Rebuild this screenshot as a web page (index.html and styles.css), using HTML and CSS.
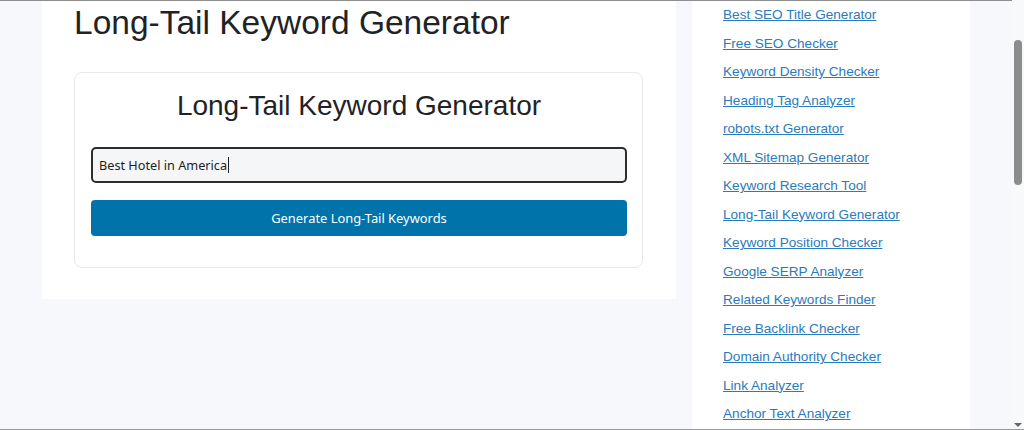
FILE: index.html
```html
<!DOCTYPE html>
<html lang="en">
<head>
<meta charset="utf-8">
<title>Long-Tail Keyword Generator</title>
<link rel="stylesheet" href="styles.css">
</head>
<body>
<div class="frame">
  <div class="page">
    <main class="content">
      <h1 class="title">Long-Tail Keyword Generator</h1>
      <section class="card">
        <h2 class="card-title">Long-Tail Keyword Generator</h2>
        <div class="field"><span class="field-text">Best Hotel in America</span><span class="caret"></span></div>
        <button class="btn" type="button">Generate Long-Tail Keywords</button>
      </section>
    </main>
    <aside class="sidebar">
      <ul class="links">
        <li><a href="#">Best SEO Title Generator</a></li>
        <li><a href="#">Free SEO Checker</a></li>
        <li><a href="#">Keyword Density Checker</a></li>
        <li><a href="#">Heading Tag Analyzer</a></li>
        <li><a href="#">robots.txt Generator</a></li>
        <li><a href="#">XML Sitemap Generator</a></li>
        <li><a href="#">Keyword Research Tool</a></li>
        <li><a href="#">Long-Tail Keyword Generator</a></li>
        <li><a href="#">Keyword Position Checker</a></li>
        <li><a href="#">Google SERP Analyzer</a></li>
        <li><a href="#">Related Keywords Finder</a></li>
        <li><a href="#">Free Backlink Checker</a></li>
        <li><a href="#">Domain Authority Checker</a></li>
        <li><a href="#">Link Analyzer</a></li>
        <li><a href="#">Anchor Text Analyzer</a></li>
      </ul>
    </aside>
  </div>
  <div class="scrollbar">
    <div class="thumb"></div>
    <div class="arrow"></div>
  </div>
</div>
</body>
</html>
```
FILE: styles.css
```css
html, body {
  margin: 0;
  padding: 0;
  height: 430px;
  overflow: hidden;
}
body {
  background: #f6f8fc;
  font-family: "Liberation Sans", Arial, sans-serif;
}
.frame {
  display: flex;
  height: 430px;
  box-sizing: border-box;
  border-bottom: 1px solid #9a9a9a;
}
.page {
  flex: 1;
  display: flex;
  align-items: flex-start;
  gap: 16px;
  padding-left: 42px;
  border-top: 1px solid #8e8e8e;
  height: 429px;
  box-sizing: border-box;
  overflow: hidden;
}
.content {
  width: 634px;
  flex: none;
  box-sizing: border-box;
  background: #ffffff;
  padding: 2px 33px 31px 32px;
}
.title {
  margin: 0;
  font-size: 33.5px;
  line-height: 40px;
  font-weight: 400;
  color: #1f2326;
}
.card {
  margin-top: 29px;
  border: 1px solid #e7e8ea;
  border-radius: 8px;
  padding: 17px 15px 31px 16px;
  background: #ffffff;
}
.card-title {
  margin: 0 0 25px;
  text-align: center;
  font-size: 28px;
  line-height: 32px;
  font-weight: 400;
  color: #1f2326;
}
.field {
  display: flex;
  align-items: center;
  height: 36px;
  box-sizing: border-box;
  border: 2px solid #2d2d2d;
  border-radius: 5px;
  background: #f5f6f8;
  padding: 0 6px;
  font-family: "Noto Sans", "Open Sans", sans-serif;
  font-size: 12.7px;
  color: #1e1e1e;
}
.caret {
  display: inline-block;
  width: 1px;
  height: 16px;
  background: #222;
  margin-left: 1px;
}
.btn {
  display: block;
  width: 100%;
  height: 36px;
  margin-top: 17px;
  border: 0;
  border-radius: 4px;
  background: #0073aa;
  color: #ffffff;
  font-family: "Noto Sans", "Open Sans", sans-serif;
  font-size: 12.9px;
  cursor: pointer;
}
.sidebar {
  width: 278px;
  flex: none;
  align-self: stretch;
  background: #ffffff;
  padding-left: 31px;
  box-sizing: border-box;
}
.links {
  list-style: none;
  margin: 0;
  padding: 0;
}
.links li {
  line-height: 28.5px;
  font-size: 13.6px;
}
.links a {
  color: #2b7bba;
  text-decoration: underline;
}
.scrollbar {
  width: 12px;
  flex: none;
  position: relative;
  background: #f8f9fb;
}
.thumb {
  position: absolute;
  left: 2px;
  top: 40px;
  width: 8px;
  height: 145px;
  border-radius: 4px;
  background: #8c8c8c;
}
.arrow {
  position: absolute;
  left: 2px;
  bottom: 2px;
  width: 0;
  height: 0;
  border-left: 4px solid transparent;
  border-right: 4px solid transparent;
  border-top: 4px solid #666;
}
```
